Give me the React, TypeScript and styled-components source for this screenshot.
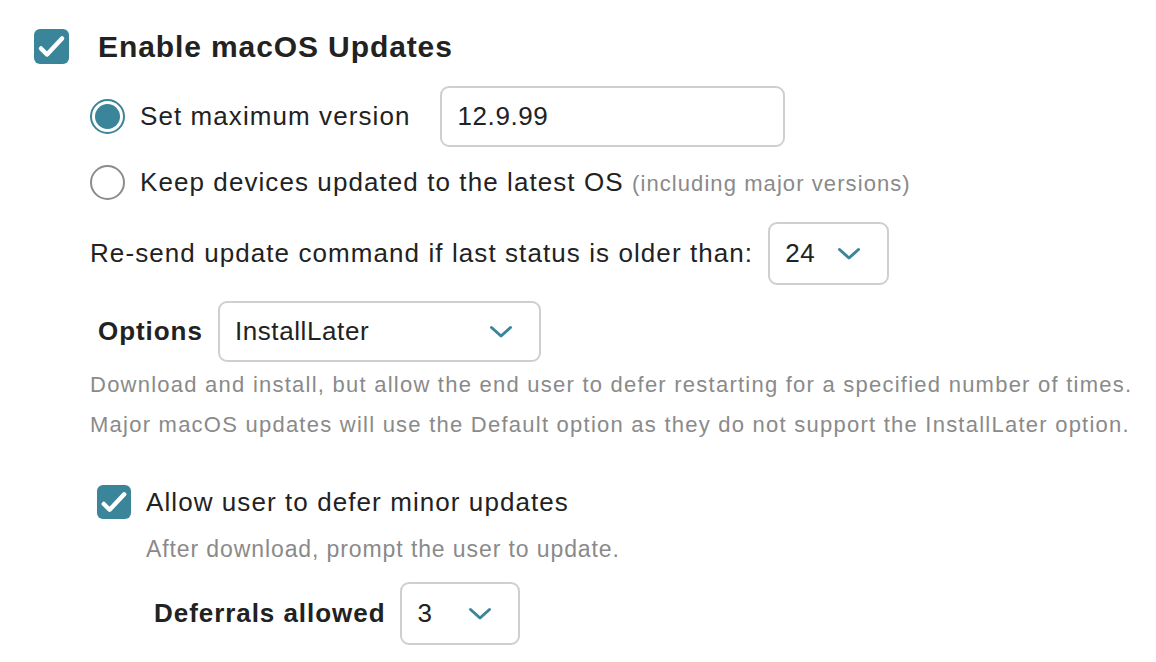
import styled, { createGlobalStyle } from 'styled-components';

const teal = '#3a8599';

const GlobalStyle = createGlobalStyle`
  html, body { margin: 0; padding: 0; background: #ffffff; }
  body {
    font-family: "Liberation Sans", Arial, sans-serif;
    color: #222222;
    -webkit-font-smoothing: antialiased;
  }
`;

const Page = styled.div`
  padding: 29px 0 0 34px;
  display: flex;
  flex-direction: column;
`;

const HeaderRow = styled.div`
  display: flex;
  align-items: center;
  gap: 29px;
  height: 35px;
`;

const Title = styled.h1`
  margin: 0;
  font-size: 30px;
  font-weight: 700;
  letter-spacing: 0.9px;
  color: #222;
`;

const Section = styled.div`
  display: flex;
  flex-direction: column;
  padding-left: 56px;
`;

const Row = styled.div<{ $top: number; $height: number; $indent?: number; $gap?: number }>`
  display: flex;
  align-items: center;
  gap: ${p => p.$gap ?? 15}px;
  margin-top: ${p => p.$top}px;
  height: ${p => p.$height}px;
  padding-left: ${p => p.$indent ?? 0}px;
`;

const Label = styled.span`
  font-size: 26px;
  letter-spacing: 1.08px;
  color: #222;
  white-space: nowrap;
`;

const BoldLabel = styled.span`
  font-size: 26px;
  font-weight: 700;
  letter-spacing: 0.95px;
  color: #222;
  white-space: nowrap;
`;

const Muted = styled.span`
  font-size: 22px;
  letter-spacing: 1.08px;
  color: #8a8a8a;
`;

const Help = styled.div<{ $top: number; $indent?: number; $lh: number; $size: number; $ls: number }>`
  margin-top: ${p => p.$top}px;
  padding-left: ${p => p.$indent ?? 0}px;
  font-size: ${p => p.$size}px;
  line-height: ${p => p.$lh}px;
  letter-spacing: ${p => p.$ls}px;
  color: #8a8a8a;
  white-space: nowrap;
`;

const Box = styled.span<{ $size: number }>`
  width: ${p => p.$size}px;
  height: ${p => p.$size}px;
  border-radius: 6px;
  background: ${teal};
  display: inline-flex;
  align-items: center;
  justify-content: center;
  flex: none;
`;

const Radio = styled.span<{ $checked?: boolean }>`
  width: 35px;
  height: 35px;
  box-sizing: border-box;
  border-radius: 50%;
  border: 2px solid ${p => (p.$checked ? teal : '#8c8c8c')};
  background: #fff;
  display: inline-flex;
  align-items: center;
  justify-content: center;
  flex: none;

  &::after {
    content: '';
    display: ${p => (p.$checked ? 'block' : 'none')};
    width: 25px;
    height: 25px;
    border-radius: 50%;
    background: ${teal};
  }
`;

const TextInput = styled.div<{ $width: number; $height: number }>`
  width: ${p => p.$width}px;
  height: ${p => p.$height}px;
  box-sizing: border-box;
  border: 2px solid #cfcfcf;
  border-radius: 9px;
  padding: 0 16px 0 15px;
  margin-left: 15px;
  display: flex;
  align-items: center;
  font-size: 26px;
  letter-spacing: 0.6px;
  color: #222;
`;

const Select = styled.div<{ $width: number; $height: number }>`
  width: ${p => p.$width}px;
  height: ${p => p.$height}px;
  box-sizing: border-box;
  border: 2px solid #cfcfcf;
  border-radius: 9px;
  padding: 0 26px 0 15px;
  display: flex;
  align-items: center;
  justify-content: space-between;
  font-size: 26px;
  letter-spacing: 0.6px;
  color: #222;
  background: #fff;
`;

const Check = ({ size }: { size: number }) => (
  <Box $size={size}>
    <svg width={size} height={size} viewBox="0 0 35 35">
      <polyline points="7,19.5 13,25.5 28,9.5" fill="none" stroke="#fff" strokeWidth="4.5" strokeLinecap="round" strokeLinejoin="round" />
    </svg>
  </Box>
);

const Chevron = () => (
  <svg width="24" height="14" viewBox="0 0 24 14">
    <polyline points="2.5,2.5 12,11 21.5,2.5" fill="none" stroke={teal} strokeWidth="3" strokeLinecap="round" strokeLinejoin="round" />
  </svg>
);

export default function App() {
  return (
    <>
      <GlobalStyle />
      <Page>
        <HeaderRow>
          <Check size={35} />
          <Title>Enable macOS Updates</Title>
        </HeaderRow>

        <Section>
          <Row $top={22} $height={61}>
            <Radio $checked />
            <Label>Set maximum version</Label>
            <TextInput $width={345} $height={61}>12.9.99</TextInput>
          </Row>

          <Row $top={15} $height={40}>
            <Radio />
            <Label>
              Keep devices updated to the latest OS <Muted>(including major versions)</Muted>
            </Label>
          </Row>

          <Row $top={20} $height={63}>
            <Label>Re-send update command if last status is older than:</Label>
            <Select $width={121} $height={63}>
              <span>24</span>
              <Chevron />
            </Select>
          </Row>

          <Row $top={16} $height={61} $indent={8}>
            <BoldLabel>Options</BoldLabel>
            <Select $width={323} $height={61}>
              <span>InstallLater</span>
              <Chevron />
            </Select>
          </Row>

          <Help $top={3} $lh={40} $size={22} $ls={1.24}>
            Download and install, but allow the end user to defer restarting for a specified number of times.
            <br />
            Major macOS updates will use the Default option as they do not support the InstallLater option.
          </Help>

          <Row $top={40} $height={34} $indent={7}>
            <Check size={34} />
            <Label>Allow user to defer minor updates</Label>
          </Row>

          <Help $top={15} $lh={30} $indent={56} $size={23} $ls={0.9}>
            After download, prompt the user to update.
          </Help>

          <Row $top={18} $height={63} $indent={64}>
            <BoldLabel>Deferrals allowed</BoldLabel>
            <Select $width={120} $height={63}>
              <span>3</span>
              <Chevron />
            </Select>
          </Row>
        </Section>
      </Page>
    </>
  );
}
